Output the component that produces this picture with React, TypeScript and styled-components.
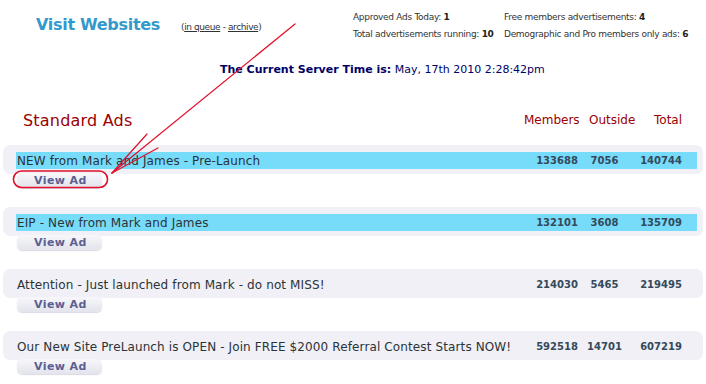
import React from "react";
import styled, { createGlobalStyle } from "styled-components";

const GlobalStyle = createGlobalStyle`
  body {
    margin: 0;
    background: #ffffff;
    font-family: "DejaVu Sans", Verdana, sans-serif;
  }
`;

const Page = styled.div`
  position: relative;
  width: 706px;
  height: 384px;
  overflow: hidden;
`;

const Header = styled.div`
  display: flex;
  align-items: flex-start;
  padding: 10px 0 0 36px;
  height: 36px;
`;

const Title = styled.div`
  width: 145px;
  font-size: 16px;
  font-weight: bold;
  letter-spacing: -0.3px;
  color: #3399cc;
  line-height: 20px;
  margin-top: 5px;
`;

const QueueLinks = styled.div`
  width: 172px;
  margin-top: 12px;
  font-size: 9px;
  letter-spacing: -0.4px;
  color: #333333;
  a {
    color: #333333;
    text-decoration: underline;
  }
`;

const Stats = styled.div`
  display: grid;
  grid-template-columns: 151px auto;
  row-gap: 5px;
  margin-top: 1px;
  font-size: 9px;
  letter-spacing: -0.3px;
  line-height: 12px;
  color: #333333;
  b {
    color: #222222;
  }
`;

const ServerTime = styled.div`
  padding: 16px 0 0 220px;
  font-size: 11px;
  line-height: 16px;
  color: #000066;
  b {
    font-weight: bold;
  }
`;

const SectionHead = styled.div`
  display: flex;
  align-items: center;
  margin-top: 32px;
  height: 20px;
`;

const SectionTitle = styled.div`
  padding-left: 23px;
  width: 501px;
  font-size: 16px;
  letter-spacing: 0.2px;
  color: #990000;
`;

const ColHead = styled.div<{ $w: number }>`
  width: ${(p) => p.$w}px;
  font-size: 12px;
  color: #990000;
`;

const AdList = styled.div`
  margin-top: 15px;
  padding-left: 3px;
`;

const AdBlock = styled.div`
  margin-bottom: 19px;
`;

const AdBox = styled.div`
  width: 700px;
  box-sizing: border-box;
  padding: 7px 6px 5px 13px;
  background: #f0f0f6;
  border-radius: 7px;
`;

const AdLine = styled.div<{ $hot?: boolean }>`
  display: flex;
  align-items: center;
  height: 17px;
  background: ${(p) => (p.$hot ? "#77dcfa" : "transparent")};
`;

const AdTitle = styled.div`
  flex: 1;
  padding-left: 1px;
  font-size: 12px;
  letter-spacing: 0.12px;
  color: #2b3338;
  white-space: nowrap;
`;

const Num = styled.div<{ $w: number }>`
  width: ${(p) => p.$w}px;
  text-align: center;
  font-size: 10px;
  font-weight: bold;
  color: #34495a;
`;

const ViewButton = styled.div`
  width: 85px;
  height: 15px;
  margin: -1px 0 0 14px;
  box-sizing: border-box;
  padding-left: 17px;
  border-radius: 5px;
  background: linear-gradient(#f7f7fa, #e3e4ec);
  box-shadow: 0 1px 1px rgba(150, 150, 180, 0.35);
  font-size: 11px;
  font-weight: bold;
  letter-spacing: 0.4px;
  line-height: 15px;
  color: #5a5f92;
`;

const Overlay = styled.svg`
  position: absolute;
  left: 0;
  top: 0;
  pointer-events: none;
`;

type Ad = {
  title: string;
  members: number;
  outside: number;
  hot?: boolean;
};

const ads: Ad[] = [
  { title: "NEW from Mark and James - Pre-Launch", members: 133688, outside: 7056, hot: true },
  { title: "EIP - New from Mark and James", members: 132101, outside: 3608, hot: true },
  { title: "Attention - Just launched from Mark - do not MISS!", members: 214030, outside: 5465 },
  {
    title: "Our New Site PreLaunch is OPEN - Join FREE $2000 Referral Contest Starts NOW!",
    members: 592518,
    outside: 14701,
  },
];

function App() {
  return (
    <Page>
      <GlobalStyle />
      <Header>
        <Title>Visit Websites</Title>
        <QueueLinks>
          (<a>in queue</a> - <a>archive</a>)
        </QueueLinks>
        <Stats>
          <span>
            Approved Ads Today: <b>1</b>
          </span>
          <span>
            Free members advertisements: <b>4</b>
          </span>
          <span>
            Total advertisements running: <b>10</b>
          </span>
          <span>
            Demographic and Pro members only ads: <b>6</b>
          </span>
        </Stats>
      </Header>
      <ServerTime>
        <b>The Current Server Time is:</b> May, 17th 2010 2:28:42pm
      </ServerTime>
      <SectionHead>
        <SectionTitle>Standard Ads</SectionTitle>
        <ColHead $w={65}>Members</ColHead>
        <ColHead $w={65}>Outside</ColHead>
        <ColHead $w={40}>Total</ColHead>
      </SectionHead>
      <AdList>
        {ads.map((ad) => (
          <AdBlock key={ad.title}>
            <AdBox>
              <AdLine $hot={ad.hot}>
                <AdTitle>{ad.title}</AdTitle>
                <Num $w={54}>{ad.members}</Num>
                <Num $w={41}>{ad.outside}</Num>
                <Num $w={72}>{ad.members + ad.outside}</Num>
              </AdLine>
            </AdBox>
            <ViewButton>View Ad</ViewButton>
          </AdBlock>
        ))}
      </AdList>
      <Overlay width="706" height="384" viewBox="0 0 706 384">
        <g stroke="#e0102a" strokeWidth="1.2" fill="none" strokeLinecap="round">
          <path d="M295 24 L112 173" />
          <path d="M147 134 L112 173" />
          <path d="M158 148 L112 173" />
          <rect x="13.5" y="171" width="94" height="16.5" rx="8" strokeWidth="1.6" />
        </g>
      </Overlay>
    </Page>
  );
}

export default App;
